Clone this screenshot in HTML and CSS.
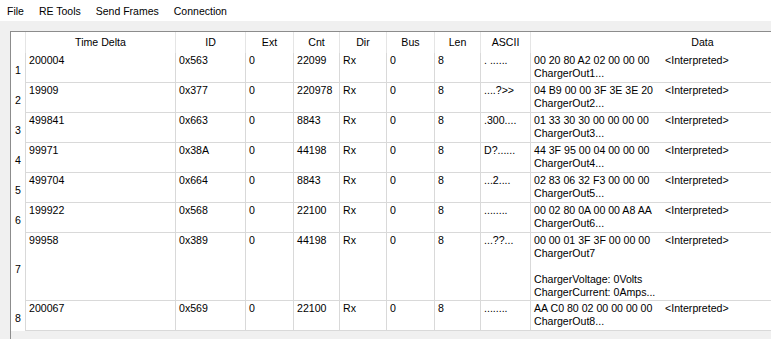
FILE: index.html
```html
<!DOCTYPE html>
<html lang="en">
<head>
  <meta charset="UTF-8" />
  <title>Frame Viewer</title>
  <link rel="stylesheet" href="styles.css">
</head>
<body>
  <nav class="menubar">
    <span class="menu-item">File</span>
    <span class="menu-item">RE Tools</span>
    <span class="menu-item">Send Frames</span>
    <span class="menu-item">Connection</span>
  </nav>
  <main class="window">
    <div class="frame">
      <table class="frames">
        <colgroup>
          <col class="c-rh"><col class="c-time"><col class="c-id"><col class="c-ext"><col class="c-cnt">
          <col class="c-dir"><col class="c-bus"><col class="c-len"><col class="c-ascii"><col class="c-data">
        </colgroup>
        <thead>
          <tr>
            <th class="corner"></th>
            <th>Time Delta</th><th>ID</th><th>Ext</th><th>Cnt</th><th>Dir</th>
            <th>Bus</th><th>Len</th><th>ASCII</th><th>Data</th>
          </tr>
        </thead>
        <tbody>
          <tr>
            <th class="rh">1</th>
            <td>200004</td><td>0x563</td><td>0</td><td>22099</td><td>Rx</td><td>0</td><td>8</td><td>. ......</td>
            <td class="data"><span class="hex">00 20 80 A2 02 00 00 00</span>&lt;Interpreted&gt;<br>ChargerOut1...</td>
          </tr>
          <tr>
            <th class="rh">2</th>
            <td>19909</td><td>0x377</td><td>0</td><td>220978</td><td>Rx</td><td>0</td><td>8</td><td>....?&gt;&gt;</td>
            <td class="data"><span class="hex">04 B9 00 00 3F 3E 3E 20</span>&lt;Interpreted&gt;<br>ChargerOut2...</td>
          </tr>
          <tr>
            <th class="rh">3</th>
            <td>499841</td><td>0x663</td><td>0</td><td>8843</td><td>Rx</td><td>0</td><td>8</td><td>.300....</td>
            <td class="data"><span class="hex">01 33 30 30 00 00 00 00</span>&lt;Interpreted&gt;<br>ChargerOut3...</td>
          </tr>
          <tr>
            <th class="rh">4</th>
            <td>99971</td><td>0x38A</td><td>0</td><td>44198</td><td>Rx</td><td>0</td><td>8</td><td>D?......</td>
            <td class="data"><span class="hex">44 3F 95 00 04 00 00 00</span>&lt;Interpreted&gt;<br>ChargerOut4...</td>
          </tr>
          <tr>
            <th class="rh">5</th>
            <td>499704</td><td>0x664</td><td>0</td><td>8843</td><td>Rx</td><td>0</td><td>8</td><td>...2....</td>
            <td class="data"><span class="hex">02 83 06 32 F3 00 00 00</span>&lt;Interpreted&gt;<br>ChargerOut5...</td>
          </tr>
          <tr>
            <th class="rh">6</th>
            <td>199922</td><td>0x568</td><td>0</td><td>22100</td><td>Rx</td><td>0</td><td>8</td><td>........</td>
            <td class="data"><span class="hex">00 02 80 0A 00 00 A8 AA</span>&lt;Interpreted&gt;<br>ChargerOut6...</td>
          </tr>
          <tr class="tall">
            <th class="rh">7</th>
            <td>99958</td><td>0x389</td><td>0</td><td>44198</td><td>Rx</td><td>0</td><td>8</td><td>...??...</td>
            <td class="data"><span class="hex">00 00 01 3F 3F 00 00 00</span>&lt;Interpreted&gt;<br>ChargerOut7<br><br>ChargerVoltage: 0Volts<br>ChargerCurrent: 0Amps...</td>
          </tr>
          <tr>
            <th class="rh">8</th>
            <td>200067</td><td>0x569</td><td>0</td><td>22100</td><td>Rx</td><td>0</td><td>8</td><td>........</td>
            <td class="data"><span class="hex">AA C0 80 02 00 00 00 00</span>&lt;Interpreted&gt;<br>ChargerOut8...</td>
          </tr>
        </tbody>
      </table>
    </div>
  </main>
</body>
</html>
```

FILE: styles.css
```css
:root {
  --grid: #d9d9d9;
  --header-line: #e5e5e5;
  --window: #f0f0f0;
  --frame: #8c8c8c;
}
html, body {
  margin: 0;
  padding: 0;
  height: 100%;
  overflow: hidden;
  background: var(--window);
  font-family: 'Liberation Sans', Arial, sans-serif;
  color: #000;
}
.menubar {
  display: flex;
  gap: 15px;
  height: 21px;
  align-items: center;
  padding-left: 7px;
  background: #fff;
  font-size: 10.5px;
}
.window {
  padding: 10px 0 0 10px;
}
.frame {
  border-left: 1px solid var(--frame);
  border-top: 1px solid var(--frame);
  height: 320px;
  overflow: hidden;
  background: var(--window);
}
.frames {
  table-layout: fixed;
  border-collapse: separate;
  border-spacing: 0;
  width: 864px;
  font-size: 10.6px;
  line-height: 13px;
}
.c-rh { width: 15px; }
.c-time { width: 150px; }
.c-id { width: 70px; }
.c-ext { width: 48px; }
.c-cnt { width: 46px; }
.c-dir { width: 47px; }
.c-bus { width: 48px; }
.c-len { width: 46px; }
.c-ascii { width: 50px; }
.c-data { width: 344px; }

thead th {
  height: 21px;
  padding: 4px 0 4px 0;
  box-sizing: border-box;
  background: #fff;
  font-weight: normal;
  text-align: center;
  border-right: 1px solid var(--header-line);
}
tbody tr {
  height: 30px;
}
tbody tr.tall {
  height: 68px;
}
td {
  padding: 1px 0 0 3px;
  vertical-align: top;
  white-space: nowrap;
  overflow: hidden;
  background: #fff;
  border-right: 1px solid var(--grid);
  border-bottom: 1px solid var(--grid);
}
.rh {
  padding: 4px 0 0 0;
  background: #fff;
  font-weight: normal;
  text-align: center;
  vertical-align: middle;
  border-right: 1px solid var(--grid);
}
.hex {
  display: inline-block;
  width: 131px;
}
```
